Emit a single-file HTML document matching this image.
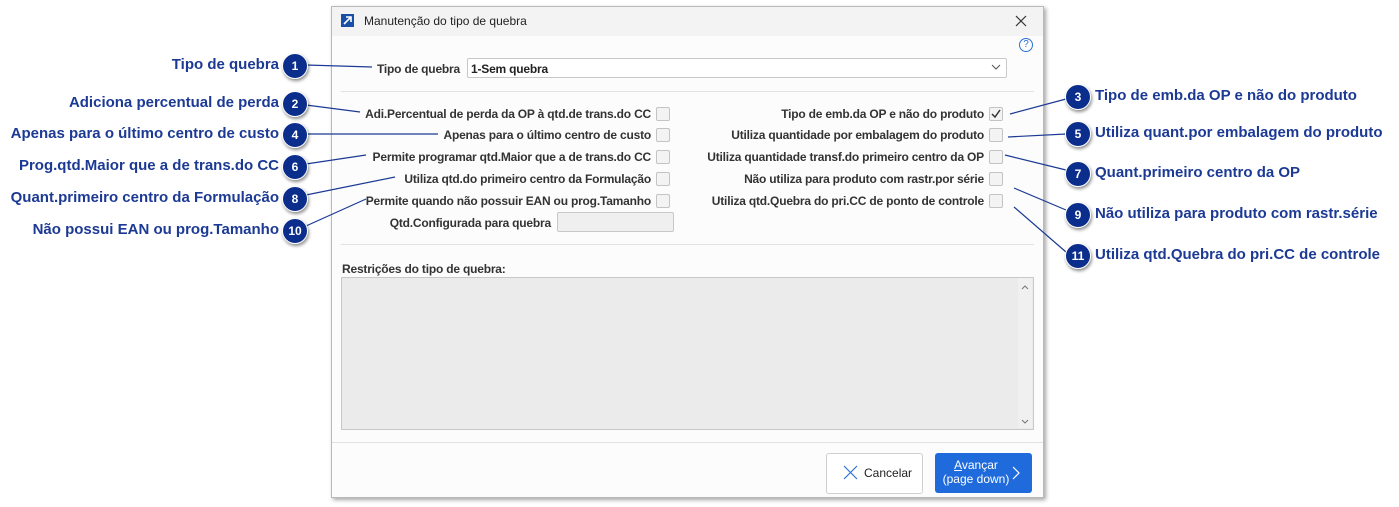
<!DOCTYPE html>
<html><head><meta charset="utf-8"><style>
body{margin:0;width:1399px;height:507px;background:#fff;position:relative;overflow:hidden;font-family:"Liberation Sans",sans-serif;}
.dlg{position:absolute;left:331px;top:6px;width:711px;height:490px;background:#fcfcfc;border:1px solid #b9b9b9;box-shadow:2px 2px 4px rgba(0,0,0,.35);}
.tb{position:absolute;left:0;top:0;right:0;height:29px;background:#f3f3f3;}
.t{position:absolute;font-size:12px;color:#222;white-space:nowrap;}
.b{font-weight:bold;color:#333;letter-spacing:-0.2px;}
.r{text-align:right;}
.cb{position:absolute;width:12px;height:12px;border:1px solid #c4c4c4;border-radius:2px;background:#f3f3f3;}
.sep{position:absolute;height:1px;background:#e2e2e2;}
.lab{position:absolute;font-size:15px;font-weight:bold;color:#1c3a94;white-space:nowrap;}
.badge{position:absolute;width:24px;height:24px;border-radius:50%;background:#0b2d8c;color:#fff;font-size:12px;font-weight:bold;text-align:center;line-height:24px;box-shadow:1px 2px 3px rgba(0,0,0,.45);border:1px solid #fff;}
</style></head><body>
<div class="dlg">
 <div class="tb"></div>
 <div style="position:absolute;left:9px;top:7px;width:13px;height:13px;background:#1a4fa8;"></div>
 <svg style="position:absolute;left:9px;top:7px" width="13" height="13"><path d="M3 10 L10 3 M5 3 H10 V8" stroke="#fff" stroke-width="1.6" fill="none"/></svg>
 <div class="t" style="left:32px;top:7px;">Manutenção do tipo de quebra</div>
 <svg style="position:absolute;left:683px;top:8px" width="12" height="12"><path d="M1 1 L11 11 M11 1 L1 11" stroke="#333" stroke-width="1.2"/></svg>
 <div style="position:absolute;left:687px;top:31px;width:12px;height:12px;border:1.3px solid #2a73d9;border-radius:50%;font-size:10px;color:#2a73d9;text-align:center;line-height:12px;">?</div>
 <div class="t b r" style="left:0;width:128px;top:55px;">Tipo de quebra</div>
 <div style="position:absolute;left:135px;top:51px;width:538px;height:18px;border:1px solid #c8c8c8;border-radius:2px;background:#fff;"></div>
 <div class="t b" style="left:139px;top:55px;color:#222">1-Sem quebra</div>
 <svg style="position:absolute;left:659px;top:57px" width="10" height="6"><path d="M1 1 L5 5 L9 1" stroke="#555" fill="none"/></svg>
 <div class="sep" style="left:9px;right:9px;top:84px;"></div>
 <div class="t b r" style="left:0;width:319px;top:100px;">Adi.Percentual de perda da OP à qtd.de trans.do CC</div>
 <div class="t b r" style="left:0;width:319px;top:121px;">Apenas para o último centro de custo</div>
 <div class="t b r" style="left:0;width:319px;top:143px;">Permite programar qtd.Maior que a de trans.do CC</div>
 <div class="t b r" style="left:0;width:319px;top:165px;">Utiliza qtd.do primeiro centro da Formulação</div>
 <div class="t b r" style="left:0;width:319px;top:187px;">Permite quando não possuir EAN ou prog.Tamanho</div>
 <div class="t b r" style="left:0;width:219px;top:209px;">Qtd.Configurada para quebra</div>
 <div class="cb" style="left:324px;top:100px"></div>
 <div class="cb" style="left:324px;top:121px"></div>
 <div class="cb" style="left:324px;top:143px"></div>
 <div class="cb" style="left:324px;top:165px"></div>
 <div class="cb" style="left:324px;top:187px"></div>
 <div style="position:absolute;left:225px;top:205px;width:115px;height:18px;border:1px solid #c8c8c8;border-radius:2px;background:#efefef;"></div>
 <div class="t b r" style="left:0;width:652px;top:100px;">Tipo de emb.da OP e não do produto</div>
 <div class="t b r" style="left:0;width:652px;top:121px;">Utiliza quantidade por embalagem do produto</div>
 <div class="t b r" style="left:0;width:652px;top:143px;">Utiliza quantidade transf.do primeiro centro da OP</div>
 <div class="t b r" style="left:0;width:652px;top:165px;">Não utiliza para produto com rastr.por série</div>
 <div class="t b r" style="left:0;width:652px;top:187px;">Utiliza qtd.Quebra do pri.CC de ponto de controle</div>
 <div class="cb" style="left:657px;top:100px"></div>
 <svg style="position:absolute;left:659px;top:102px" width="10" height="10"><path d="M1 5 L4 8 L9 1" stroke="#333" stroke-width="1.5" fill="none"/></svg>
 <div class="cb" style="left:657px;top:121px"></div>
 <div class="cb" style="left:657px;top:143px"></div>
 <div class="cb" style="left:657px;top:165px"></div>
 <div class="cb" style="left:657px;top:187px"></div>
 <div class="sep" style="left:9px;right:9px;top:237px;"></div>
 <div class="t b" style="left:10px;top:255px;">Restrições do tipo de quebra:</div>
 <div style="position:absolute;left:9px;top:270px;width:691px;height:151px;border:1px solid #c8c8c8;background:#ebebeb;"></div>
 <div style="position:absolute;left:686px;top:271px;width:14px;height:150px;background:#f0f0f0;"></div>
 <svg style="position:absolute;left:688px;top:276px" width="10" height="145"><path d="M2 6 L5 3 L8 6 M2 137 L5 140 L8 137" stroke="#777" fill="none"/></svg>
 <div class="sep" style="left:0;right:0;top:435px;"></div>
 <div style="position:absolute;left:494px;top:446px;width:95px;height:39px;border:1px solid #cfcfcf;border-radius:3px;background:#fff;"></div>
 <svg style="position:absolute;left:511px;top:458px" width="15" height="15"><path d="M1 1 L14 14 M14 1 L1 14" stroke="#2a73d9" stroke-width="1.2"/></svg>
 <div class="t" style="left:532px;top:459px;font-size:12px;">Cancelar</div>
 <div style="position:absolute;left:603px;top:446px;width:97px;height:40px;border-radius:3px;background:#1f6bdc;"></div>
 <div class="t" style="left:607px;top:451px;width:74px;text-align:center;color:#fff;line-height:14px;"><u>A</u>vançar<br>(page down)</div>
 <svg style="position:absolute;left:680px;top:459px" width="8" height="14"><path d="M1 1 L7 7 L1 13" stroke="#fff" fill="none" stroke-width="1.2"/></svg>
</div>
<svg style="position:absolute;left:0;top:0" width="1399" height="507"><g stroke="#1c3a94" stroke-width="1.2" fill="none">
<path d="M306 65 L372 67"/><path d="M306 105 L360 112"/><path d="M306 134 L438 134"/><path d="M306 164 L366 155"/><path d="M306 195 L395 177"/><path d="M306 226 L366 199"/>
<path d="M1066 99 L1010 114"/><path d="M1066 134 L1008 137"/><path d="M1066 170 L1005 155"/><path d="M1066 210 L1014 188"/><path d="M1066 252 L1014 207"/>
</g></svg>
<div class="lab r" style="left:0;width:279px;top:56px;">Tipo de quebra</div>
<div class="lab r" style="left:0;width:279px;top:94px;">Adiciona percentual de perda</div>
<div class="lab r" style="left:0;width:279px;top:125px;">Apenas para o último centro de custo</div>
<div class="lab r" style="left:0;width:279px;top:157px;">Prog.qtd.Maior que a de trans.do CC</div>
<div class="lab r" style="left:0;width:279px;top:189px;">Quant.primeiro centro da Formulação</div>
<div class="lab r" style="left:0;width:279px;top:221px;">Não possui EAN ou prog.Tamanho</div>
<div class="badge" style="left:282px;top:53px">1</div>
<div class="badge" style="left:282px;top:91px">2</div>
<div class="badge" style="left:282px;top:122px">4</div>
<div class="badge" style="left:282px;top:154px">6</div>
<div class="badge" style="left:282px;top:186px">8</div>
<div class="badge" style="left:282px;top:218px">10</div>
<div class="badge" style="left:1065px;top:84px">3</div>
<div class="badge" style="left:1065px;top:121px">5</div>
<div class="badge" style="left:1065px;top:161px">7</div>
<div class="badge" style="left:1065px;top:202px">9</div>
<div class="badge" style="left:1065px;top:243px">11</div>
<div class="lab" style="left:1095px;top:87px;">Tipo de emb.da OP e não do produto</div>
<div class="lab" style="left:1095px;top:124px;">Utiliza quant.por embalagem do produto</div>
<div class="lab" style="left:1095px;top:164px;">Quant.primeiro centro da OP</div>
<div class="lab" style="left:1095px;top:205px;">Não utiliza para produto com rastr.série</div>
<div class="lab" style="left:1095px;top:246px;">Utiliza qtd.Quebra do pri.CC de controle</div>
</body></html>
